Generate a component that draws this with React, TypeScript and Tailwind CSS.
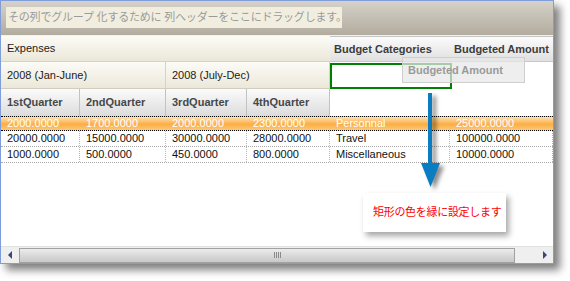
import React from 'react';

const font = "font-['Liberation_Sans','Noto_Sans_CJK_JP',sans-serif]";

const rows = [
  ['2000.0000', '1700.0000', '2000.0000', '2300.0000', 'Personnal', '25000.0000'],
  ['20000.0000', '15000.0000', '30000.0000', '28000.0000', 'Travel', '100000.0000'],
  ['1000.0000', '500.0000', '450.0000', '800.0000', 'Miscellaneous', '10000.0000'],
];

const widths = ['w-[79px]', 'w-[86px]', 'w-[81px]', 'w-[83px]', 'w-[120px]', 'w-[103px]'];

export default function App() {
  return (
    <div className={`w-[570px] h-[281px] bg-white ${font}`}>
      <div className="relative w-[554px] h-[264px] border border-[#7f9ddb] bg-white flex flex-col overflow-hidden shadow-[6px_6px_8px_rgba(0,0,0,0.5)]">
        {/* Group-by panel */}
        <div className="h-[35px] shrink-0 bg-gradient-to-b from-[#d6d2c9] to-[#b2ac9f] pt-[6px] pl-[5px] border-b border-[#f4f2ec]">
          <div className="w-[336px] h-[21px] bg-[#f1eee0] flex items-center pl-[2px] text-[11px] text-[#9a9a9a] tracking-[-0.2px] whitespace-nowrap">
            その列でグループ 化するために 列ヘッダーをここにドラッグします。
          </div>
        </div>

        {/* Header */}
        <div className="flex shrink-0">
          <div className="w-[329px] flex flex-col">
            <div className="h-[26px] flex items-center pl-[6px] text-[11px] text-[#1c1c1c] bg-gradient-to-b from-[#fcfbf6] to-[#ebe8da] border-b border-[#d6d2c4]">
              Expenses
            </div>
            <div className="flex h-[27px] text-[11px] text-[#1c1c1c] bg-gradient-to-b from-[#fcfbf6] to-[#ebe8da] border-b border-[#d0ccbf]">
              <div className="w-[165px] flex items-center pl-[6px] border-r border-[#d6d2c4]">2008 (Jan-June)</div>
              <div className="w-[164px] flex items-center pl-[6px] border-r border-[#d6d2c4]">2008 (July-Dec)</div>
            </div>
            <div className="flex h-[27px] text-[11px] font-bold text-[#474747] bg-gradient-to-b from-[#fbfbfb] to-[#dcdcdc]">
              {['1stQuarter', '2ndQuarter', '3rdQuarter', '4thQuarter'].map((q, i) => (
                <div key={q} className={`${widths[i]} flex items-center pl-[6px] border-r border-[#c2c2c2]`}>
                  {q}
                </div>
              ))}
            </div>
          </div>
          <div className="w-[223px] flex flex-col">
            <div className="flex h-[26px] text-[11px] font-bold text-[#3c3c3c] bg-gradient-to-b from-[#fbfbfb] to-[#e0e0e0] border-b border-[#c8c8c8] border-t border-t-[#c4c4c4]">
              <div className="w-[120px] flex items-center pl-[4px]">Budget Categories</div>
              <div className="w-[103px] flex items-center pl-[4px] whitespace-nowrap">Budgeted Amount</div>
            </div>
          </div>
        </div>

        {/* Rows */}
        <div className="flex flex-col shrink-0 text-[11px]">
          {rows.map((r, ri) => (
            <div
              key={ri}
              className={
                ri === 0
                  ? 'flex h-[15px] text-white border-y border-dotted border-black bg-[linear-gradient(to_bottom,#ffe2b4,#fbae44_55%,#fcc878)]'
                  : 'flex h-[16px] text-[#111] border-b border-dotted border-[#a9a9a9]'
              }
            >
              {r.map((c, ci) => (
                <div
                  key={ci}
                  className={`${widths[ci]} flex items-center pl-[6px] leading-none ${
                    ri === 0 ? '' : 'border-r border-dotted border-[#b4b4b4]'
                  }`}
                >
                  {c}
                </div>
              ))}
            </div>
          ))}
        </div>

        <div className="flex-1" />

        {/* Scrollbar */}
        <div className="h-[17px] shrink-0 bg-[#efefef] border-t border-[#e2e2e2] flex items-center">
          <div className="w-[18px] flex justify-center">
            <div className="w-0 h-0 border-y-[4px] border-y-transparent border-r-[4px] border-r-[#3a4775]" />
          </div>
          <div className="w-[496px] h-[15px] border border-[#a2a2a2] bg-gradient-to-b from-[#ececec] via-[#d9d9d9] to-[#c9c9c9] flex items-center justify-center">
            <div className="flex gap-[1px] ml-[20px]">
              {[0, 1, 2, 3].map((g) => (
                <div key={g} className="w-[1px] h-[6px] bg-[#8a8a8a]" />
              ))}
            </div>
          </div>
          <div className="flex-1 flex justify-end pr-[6px]">
            <div className="w-0 h-0 border-y-[4px] border-y-transparent border-l-[4px] border-l-[#3a4775]" />
          </div>
        </div>

        {/* Drop target rectangle */}
        <div className="absolute left-[329px] top-[62px] w-[122px] h-[26px] border-2 border-[#008000] bg-white" />

        {/* Drag ghost */}
        <div className="absolute left-[401px] top-[56px] w-[123px] h-[26px] border border-[#cfcfcf] bg-[rgba(232,232,232,0.72)] flex items-center pl-[5px] text-[11px] font-bold text-[#9a9a9a] whitespace-nowrap">
          Budgeted Amount
        </div>

        {/* Arrow */}
        <svg
          className="absolute left-[417px] top-[92px] drop-shadow-[4px_3px_2px_rgba(0,0,0,0.45)]"
          width="26"
          height="96"
          viewBox="0 0 26 96"
        >
          <rect x="10" y="0" width="4" height="72" fill="#0a7cc2" />
          <polygon points="3,70 22,70 12.5,94" fill="#0a7cc2" />
        </svg>

        {/* Callout */}
        <div className="absolute left-[362px] top-[192px] w-[143px] h-[39px] bg-white shadow-[3px_4px_6px_rgba(0,0,0,0.35)] flex items-center pl-[10px] text-[11px] text-[#ff0000] tracking-[-0.3px] whitespace-nowrap">
          矩形の色を緑に設定します
        </div>
      </div>
    </div>
  );
}
